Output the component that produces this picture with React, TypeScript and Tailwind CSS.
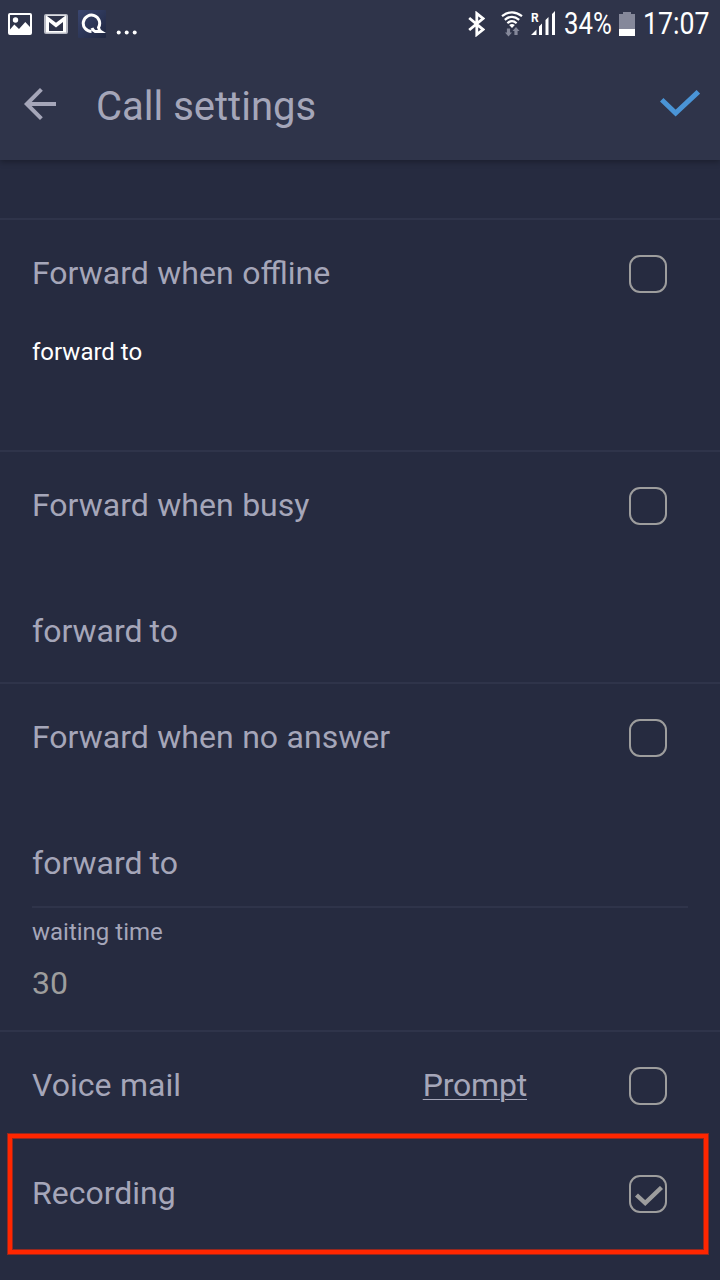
import type { ReactNode } from 'react';

function StatusBar() {
  return (
    <div className="flex h-12 items-center justify-between pl-2 pr-[10px] text-white">
      <div className="flex items-center">
        <svg width="24" height="22" viewBox="0 0 24 22">
          <rect x="1" y="1" width="22" height="20" rx="1" fill="none" stroke="currentColor" strokeWidth="2" />
          <circle cx="7.5" cy="7" r="2.7" fill="currentColor" />
          <path d="M2 16.5L6.3 11.5L11 16L17.3 9L22 14V20H2Z" fill="currentColor" />
        </svg>
        <svg className="ml-3" width="24" height="20" viewBox="0 0 24 20">
          <rect width="24" height="20" rx="2" fill="#b9bbc5" />
          <path d="M2 1.5H22V18.5H2Z" fill="#fff" />
          <path d="M3 2H21L12 8.8Z" fill="#2f344a" />
          <path d="M5 8L12 13.5L19 8V17H5Z" fill="#2f344a" />
        </svg>
        <svg className="ml-[10px]" width="28" height="28" viewBox="0 0 28 28">
          <defs>
            <linearGradient id="tile" x1="0" y1="0" x2="1" y2="1">
              <stop offset="0" stopColor="#3a4670" />
              <stop offset="1" stopColor="#202740" />
            </linearGradient>
          </defs>
          <rect width="28" height="28" rx="1" fill="url(#tile)" />
          <path
            d="M13.5 21.5A8.2 8.2 0 1 1 20.5 17.5Q21.2 20.5 22.8 21.5H17Q14.8 20.5 14 18"
            fill="none"
            stroke="#fff"
            strokeWidth="3"
          />
        </svg>
        <svg className="ml-2.5 mt-[17px]" width="22" height="5" viewBox="0 0 22 5">
          <circle cx="2.7" cy="2.5" r="2" fill="currentColor" />
          <circle cx="10.7" cy="2.5" r="2" fill="currentColor" />
          <circle cx="18.7" cy="2.5" r="2" fill="currentColor" />
        </svg>
      </div>

      <div className="flex items-center">
        <svg width="17" height="26" viewBox="0 0 17 26">
          <path d="M1.2 7L15 18.5L8.8 23.5V2.5L15 7.5L1.2 19" fill="none" stroke="currentColor" strokeWidth="2.8" />
        </svg>
        <svg className="ml-4" width="22" height="26" viewBox="0 0 22 26">
          <g fill="none" stroke="currentColor" strokeWidth="2.2">
            <path d="M1 5.2Q11 -2.6 21 5.2" />
            <path d="M3.8 8.8Q11 2.8 18.2 8.8" />
            <path d="M6.4 12.2Q11 8 15.6 12.2" />
          </g>
          <path d="M8.2 14Q11 12 13.8 14L11 17Z" fill="currentColor" />
          <path d="M5.9 17.5H9.1V21.5H11L7.5 25.5L4 21.5H5.9Z" fill="#85889a" />
          <path d="M13.4 24V20H11.5L15 16L18.5 20H16.6V24Z" fill="#85889a" />
        </svg>
        <div className="relative ml-[8px] h-[26px] w-[25px]">
          <svg width="25" height="26" viewBox="0 0 25 26">
            <path d="M0 24L5.5 18.5V24ZM8 24V15.5L11 12.5V24ZM14.5 24V9L17.5 6V24ZM21 24V3L24 0V24Z" fill="currentColor" />
          </svg>
          <span className="absolute left-0 top-0 text-[12px] font-bold leading-[14px]">R</span>
        </div>
        <div className="ml-[8px] w-[49px] whitespace-nowrap text-[31px] leading-9">
          <span className="inline-block origin-left scale-x-[0.83]">34%</span>
        </div>
        <svg className="ml-[6px]" width="16" height="24" viewBox="0 0 16 24">
          <path d="M4 0H12V2H16V17H0V2H4Z" fill="#85889a" />
          <path d="M0 17H16V24H0Z" fill="currentColor" />
        </svg>
        <div className="ml-2 w-[67px] whitespace-nowrap text-[31px] leading-9">
          <span className="inline-block origin-left scale-x-[0.86]">17:07</span>
        </div>
      </div>
    </div>
  );
}

function Header() {
  return (
    <header className="relative h-40 bg-[#2f344a] shadow-[0_2px_6px_rgba(0,0,0,0.3)]">
      <StatusBar />
      <div className="flex h-28 items-center pl-6 pr-5">
        <svg width="32" height="32" viewBox="0 0 32 32" fill="none" stroke="currentColor" strokeWidth="4">
          <path d="M32 16H3M17.4 1.4L2.8 16L17.4 30.6" />
        </svg>
        <h1 className="ml-10 mt-[6px] text-[40px] leading-[48px]">Call settings</h1>
        <svg className="ml-auto" width="40" height="28" viewBox="0 0 40 28">
          <path d="M1.7 9.7L15.6 23L38.3 1.8" fill="none" stroke="#4a94d6" strokeWidth="5" />
        </svg>
      </div>
    </header>
  );
}

function Checkbox({ checked = false }: { checked?: boolean }) {
  return (
    <span className="flex h-[38px] w-[38px] items-center justify-center rounded-[11px] border-2 border-[#9d9d9d]">
      {checked && (
        <svg className="ml-0.5 mt-1" width="28" height="20" viewBox="0 0 28 20">
          <path d="M1.5 9L10.2 17L26.5 1.5" fill="none" stroke="#9d9d9d" strokeWidth="4.4" />
        </svg>
      )}
    </span>
  );
}

function SettingRow({ label, checked, children }: { label: string; checked?: boolean; children?: ReactNode }) {
  return (
    <div className="flex h-[108px] items-center pl-8 pr-[53px]">
      <span className="mb-[2px] text-[32px] leading-10 [word-spacing:0.6px]">{label}</span>
      <div className="ml-auto flex items-center">
        {children}
        <Checkbox checked={checked} />
      </div>
    </div>
  );
}

export default function App() {
  return (
    <div className="h-[1280px] w-[720px] overflow-hidden bg-[#262b40] font-['Roboto',sans-serif] text-[#a5a6b9]">
      <Header />

      <div className="h-[60px] border-b-2 border-[#2f344a]" />

      <section className="h-[232px] border-b-2 border-[#2f344a]">
        <SettingRow label="Forward when offline" />
        <p className="px-8 pt-2 text-2xl text-white">forward to</p>
      </section>

      <section className="h-[232px] border-b-2 border-[#2f344a]">
        <SettingRow label="Forward when busy" />
        <p className="px-8 pt-[51px] text-[32px] leading-10 [word-spacing:-1px]">forward to</p>
      </section>

      <section className="h-[348px] border-b-2 border-[#2f344a]">
        <SettingRow label="Forward when no answer" />
        <div className="mx-8 h-[116px] border-b-2 border-[#2f344a] pt-[51px]">
          <p className="text-[32px] leading-10 [word-spacing:-1px]">forward to</p>
        </div>
        <div className="px-8 pt-2">
          <p className="text-2xl">waiting time</p>
          <p className="mt-[15px] text-[32px] leading-10 text-[#9d9d9d]">30</p>
        </div>
      </section>

      <SettingRow label="Voice mail">
        <a className="mb-[2px] mr-[102px] text-[32px] leading-10 tracking-[-0.2px] underline decoration-1 underline-offset-[3px]">
          Prompt
        </a>
      </SettingRow>

      {/* Recording row, with the highlight frame laid over it */}
      <div className="relative">
        <SettingRow label="Recording" checked />
        <div className="pointer-events-none absolute -top-[6px] left-2 h-[120px] w-[700px] border-4 border-[#ff2600] shadow-[0_0_0_1px_rgba(255,38,0,0.5),inset_0_0_0_1px_rgba(255,38,0,0.5)]" />
      </div>
    </div>
  );
}
